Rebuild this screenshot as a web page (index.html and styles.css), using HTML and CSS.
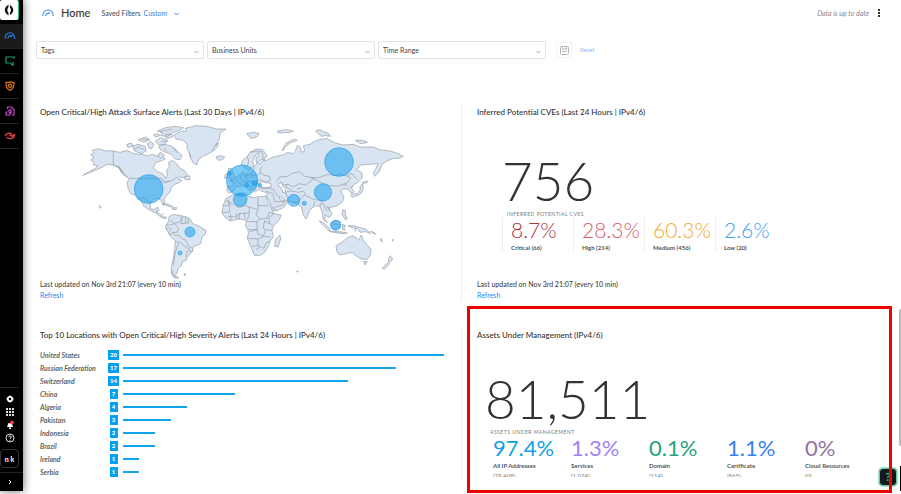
FILE: index.html
```html
<!DOCTYPE html>
<html lang="en">
<head>
    <meta charset="UTF-8">
    <meta name="viewport" content="width=device-width, initial-scale=1">
    <title>Home</title>
    <link rel="stylesheet" href="styles.css">
</head>
<body>

    <nav class="sidebar" aria-label="Main">
        <a class="logo" href="#" aria-label="Start">
            <svg width="12" height="12" viewBox="0 0 12 12"><path d="M5.500.6C3.500 2 1.800 3.800 1.800 6s1.500 4 3.700 5.400V8.800C4.700 8 4.400 7.200 4.400 6s.3-2 1.100-2.800zM7 1c1.800 1.300 3.300 3 3.300 5S9 9.800 7 11V8.600C7.600 8 7.900 7.200 7.900 6S7.600 4.200 7 3.500z" fill="#111"/></svg>
        </a>
        <a class="nav-item active" href="#" aria-label="Home">
            <svg width="12" height="12" viewBox="0 0 12 12" fill="none" stroke="#2a70c8" stroke-width="1.300"><path d="M1 9C1.200 5 3.300 2.800 6 2.800S10.500 5 11 9"/><path d="M3.600 8.500C4 6.300 5.500 5.300 8 5.600L6.500 7"/></svg>
        </a>
        <a class="nav-item" href="#" aria-label="Monitoring">
            <svg width="12" height="12" viewBox="0 0 12 12" fill="none" stroke="#1a9f78" stroke-width="1.200"><path d="M10 4V2H2v6h3.500M6 8l3 2.200V7"/></svg>
        </a>
        <a class="nav-item" href="#" aria-label="Protection">
            <svg width="12" height="12" viewBox="0 0 12 12" fill="none" stroke="#d8700e" stroke-width="1.300"><path d="M6 1.800c1.500.6 2.600.8 4 .6.3 3.600-.8 6.400-4 8C2.800 8.800 1.700 6 2 2.400c1.400.2 2.500 0 4-.6z"/><circle cx="6" cy="5.700" r="1.600"/></svg>
        </a>
        <a class="nav-item" href="#" aria-label="Reports">
            <svg width="12" height="12" viewBox="0 0 12 12" fill="none" stroke="#c248c9" stroke-width="1.200"><path d="M3.500 4V2h4l2.500 2.500V10H8M2 10V7h4v3zM4 5.500l3-1V9"/></svg>
        </a>
        <a class="nav-item" href="#" aria-label="Alerts">
            <svg width="12" height="12" viewBox="0 0 12 12" fill="none" stroke="#cf3c43" stroke-width="1.500"><path d="M1 6C3 3 5.500 2.500 7.500 4l-2 2M11 4.500C10.500 8 7 9.500 4 8L2.500 7M7 6.500l4-2"/></svg>
        </a>

        <div class="sidebar-tools">
            <a href="#" aria-label="Settings">
                <svg width="10" height="10" viewBox="0 0 10 10"><circle cx="5" cy="5" r="2.200" fill="none" stroke="#fff" stroke-width="1.800"/><path d="M5 1.300v1.200M5 7.500v1.200M1.300 5h1.200M7.500 5h1.200" stroke="#fff"/></svg>
            </a>
            <a href="#" aria-label="Apps">
                <svg width="10" height="10" viewBox="0 0 10 10" fill="#ddd"><path d="M2 2h2v2H2zM5 2h2v2H5zM8 2h2v2H8zM2 5h2v2H2zM5 5h2v2H5zM8 5h2v2H8zM2 8h2v2H2zM5 8h2v2H5zM8 8h2v2H8z" transform="translate(-1 -1)"/></svg>
            </a>
            <a href="#" aria-label="Notifications">
                <svg width="10" height="10" viewBox="0 0 10 10"><path d="M2 7L3.500 3 7 3.500 8 7zM4 7.500h2v1.500H4z" fill="#fff"/><circle cx="7" cy="2.500" r="1.900" fill="#e0484d"/></svg>
            </a>
            <a href="#" aria-label="Help">
                <svg width="10" height="10" viewBox="0 0 10 10" fill="none" stroke="#ddd"><circle cx="5" cy="5" r="4"/><path d="M3.600 4C3.700 2.500 6.400 2.500 6.400 4 6.400 5 5 5 5 6.200M5 7v1"/></svg>
            </a>
        </div>
        <button class="avatar" type="button">n k</button>
        <button class="expand" type="button" aria-label="Expand menu">
            <svg width="6" height="6" viewBox="0 0 6 6" fill="none" stroke="#fff"><path d="M2 1l2 2-2 2"/></svg>
        </button>
    </nav>

    <main class="content">
        <header class="topbar">
            <svg class="home-icon" width="12" height="10" viewBox="0 0 12 10" fill="none" stroke="#4a90e8" stroke-width="1.200"><path d="M.7 8C1 4 3 2 6 2s5 2.500 5.300 6"/><path d="M3.500 8C4 5.700 5.200 5 8 5.100"/></svg>
            <h1>Home</h1>
            <label class="saved" for="saved">Saved Filters</label>
            <span class="select-wrap saved-select">
                <select id="saved"><option>Custom</option></select>
                <svg class="chevron" width="5" height="4" viewBox="0 0 5 4" fill="none" stroke="#3f8fea"><path d="M.5 1l2 2 2-2"/></svg>
            </span>
            <span class="status">Data is up to date</span>
            <button class="more" type="button" aria-label="More">
                <svg width="4" height="8" viewBox="0 0 4 8" fill="#333"><path d="M1 0h2v2H1zM1 3h2v2H1zM1 6h2v2H1z"/></svg>
            </button>
        </header>

        <form class="filters">
            <span class="select-wrap">
                <select aria-label="Tags"><option>Tags</option></select>
                <svg class="chevron" width="5" height="4" viewBox="0 0 5 4" fill="none" stroke="#aaa"><path d="M.5 1l2 2 2-2"/></svg>
            </span>
            <span class="select-wrap">
                <select aria-label="Business Units"><option>Business Units</option></select>
                <svg class="chevron" width="5" height="4" viewBox="0 0 5 4" fill="none" stroke="#aaa"><path d="M.5 1l2 2 2-2"/></svg>
            </span>
            <span class="select-wrap">
                <select aria-label="Time Range"><option>Time Range</option></select>
                <svg class="chevron" width="5" height="4" viewBox="0 0 5 4" fill="none" stroke="#aaa"><path d="M.5 1l2 2 2-2"/></svg>
            </span>
            <button class="save" type="button" aria-label="Save">
                <svg width="9" height="9" viewBox="0 0 9 9" fill="none" stroke="#b5b5b5"><rect x=".5" y=".5" width="8" height="8" rx="1"/><path d="M2.500 1v2h4V1M2 5.500h5"/></svg>
            </button>
            <button class="reset" type="reset">Reset</button>
        </form>

        <div class="panels">
            <section class="panel">
                <h2>Open Critical/High Attack Surface Alerts (Last 30 Days | IPv4/6)</h2>
                <svg class="map" viewBox="0 0 1050 492" role="img" aria-label="World map of alerts">
                    <!-- Americas -->
                    <g class="land">
                        <path d="M62 135L72 128 62 120 72 112 66 106 84 101 104 107 130 108 150 112 172 106 190 116 215 118 232 122 248 118 262 124 268 116 276 124 286 132 272 138 258 142 250 158 262 170 278 176 288 190 292 180 290 166 298 156 296 142 308 136 322 148 330 160 342 166 352 178 344 188 330 186 324 192 336 196 326 204 314 208 304 218 300 230 290 242 282 252 284 268 278 266 272 254 258 250 246 256 240 266 242 280 252 284 262 276 266 284 260 292 272 298 276 306 290 306 286 312 272 306 258 294 240 286 222 274 214 258 202 250 196 240 182 236 174 220 172 200 178 192 160 178 148 158 132 150 112 148 98 156 84 162 62 172 38 181 76 160 84 152 70 150 72 142z"/>
                        <path d="M312 60L330 50 350 48 346 40 378 32 410 34 440 42 468 42 450 54 448 72 440 86 446 92 430 108 412 118 398 124 386 134 380 150 370 144 362 130 358 112 350 100 352 88 340 76 318 72z"/>
                        <path d="M298 304L314 298 330 302 346 304 360 312 368 326 384 332 408 346 406 356 396 368 392 386 372 394 366 410 352 426 348 436 338 440 334 452 324 460 322 474 314 478 326 490 312 488 304 476 304 456 310 430 314 400 316 378 302 364 290 346 286 334 294 322z"/>
                        <path d="M188 94l16-6 22 6 2 14-14 8-20-8zM170 88l14-4 6 8-16 6zM204 74l22-8 14 8-18 8zM232 86l10-6 10 8-8 14-8-4zM256 78l16-10 20 8-10 14-18-2zM266 94l18-6 22 6 14 12 16 16-6 12-14-2-12-14-18-6-16-10zM262 48l24-10 30-4 24 4-12 8-22 8-14 10-20-2 6-8zM286 58l20 0 2 8-20 4zM250 60l12-4 8 6-14 4zM270 112l14 8-10 10-10-6zM438 126l12-4 14 4-6 8-14 2zM342 186l16-4 2 12-14 0zM276 268l14-2 18 8-8 2-14-6zM306 278l14 0-2 6-12-2zM88 272l6 4-4 4zM342 476l6 2-5 4z"/>
                    </g>
                    <g class="border">
                        <path d="M130 108V150L148 160 158 176 164 184M178 190L274 190 286 200 304 198 322 186M202 250l18-2 14 10 6 8M258 292l6-8M274 304l6-10M300 316l14 10 18-8 8-14M332 304l4 14-4 8 24-2M346 306l2 18M354 310l2 14M288 330l12 0 14-4 12 14-6 12-12 0-8 10M308 352l8 10 10-2 8 10 14 6 8 18 12 6M316 380l14 2 18 14 10 6-6 8M326 384l-10 28-6 38M350 410l-2 16M358 408l12 2M288 342l10-4M304 338l-8 18"/>
                        <path d="M190 104l14-8 20 8M216 72l18 2M274 80l20-2M270 50l36-8M308 98l14 16M282 98l8 12M426 108l10-18 12-6M356 112l8 18M142 152l10 8 8 14 12 12M146 158l8 14M306 466l4 16 10 6M436 94l6-10M272 196l12 8 16-6"/>
                    </g>
                    <g transform="translate(480 0)">
                        <g class="land">
                            <path d="M-12 250L8 240 30 236 46 234 52 244 74 248 90 244 108 244 112 258 122 276 132 296 154 300 148 314 130 334 126 346 130 366 122 376 116 392 106 410 92 420 74 422 66 404 58 384 52 370 56 352 46 330 50 318 40 314 24 312 0 318-16 306-24 292-20 270z"/>
                            <path d="M34 150L38 136 52 124 60 112 78 102 98 104 104 112 112 124 104 128 106 138 124 128 138 124 160 120 172 112 188 116 196 108 202 92 212 96 214 112 224 108 220 92 240 88 260 76 290 70 316 84 340 90 370 88 392 96 430 96 450 104 480 108 500 114 520 124 508 130 490 130 470 138 456 148 448 170 434 184 430 174 440 156 444 146 420 148 392 150 380 164 396 174 396 190 384 202 372 208 364 218 372 230 364 236 354 222 340 222 332 228 342 246 338 260 322 272 306 276 296 280 306 296 298 308 286 300 284 312 292 324 280 312 276 290 270 274 256 272 240 284 234 300 228 312 220 300 214 276 206 270 190 262 172 258 158 250 146 244 150 254 168 258 172 264 160 278 138 288 130 286 120 262 110 244 112 234 94 228 86 222 76 232 70 220 60 214 66 226 60 228 50 216 40 212 30 214 18 216 10 228-2 234-10 228-6 214 8 212 12 202 0 196 16 190 30 178 40 170 46 176 58 174 70 166 72 154 62 158 56 168 48 160z"/>
                            <path d="M318 392L336 382 350 370 366 362 376 366 386 376 394 360 400 376 412 390 424 404 420 422 410 434 396 432 380 424 366 412 348 416 328 420 320 408zM400 440l12 0-6 10zM150 360l2 12-8 24-10-2 2-20zM480 422l8 10-8 10-6-4zM474 442l4 4-14 16-8-2z"/>
                            <path d="M-4 192l6-12-8-6 2-14 10 2 4 16 8 8-8 8zM-14 178l8-2 0 10-10 4zM268 318l12 4 18 18 4 10-10-6-16-16zM302 324l16-8 14 4-4 18-12 6-12-6zM302 350l26 0 24 4-14 2zM336 328l12 4-6 4 2 10-6-2zM338 284l8 2 0 14 6 12-6 2-10-16zM354 332l16 0 20 6 18 4 14 14-14-6-18 2-8-10-16-4zM362 242l8-6 12 0 8-10 0-12 8-8 2 12-4 14-10 8-18 6zM396 202l18-4-10 8zM156 106l12-22 24-12 10 4-22 8-14 12-8 12zM50 56l20-4 18 4-8 10-18 4zM142 48l24-4 24 4-8 4-36 2zM256 48l14-4 10 6 14 4 8 10-16-2-12 2zM376 76l24 0 12 6-20 4zM422 348l16 8-2 2-14-8zM452 370l6 12-6-6zM486 374l4 0-2 5zM200 468l5 0-2 4z"/>
                        </g>
                        <g class="water">
                            <path d="M78 118l10-6-10 20 2 16-8 6-4-14zM82 142l12-8 10 2-12 6-2 6zM86 208l12-8 24 6 2 10-22 2-14-2zM146 206l10-4 2 12 8 6 0 14-8-2-2-12-10-6z"/>
                        </g>
                        <g class="border">
                            <path d="M60 112l22-4 14 2 4 24M52 124l4 14-4 18M34 176l12 8 16-6 18 4 12-8-2-12 8-8M90 172l10 8 18 4 4 10-14 8-18-8-12 6-12-4M30 180l4 14 12 6 16-2 12 8 14-2M48 176l2 16M66 176l0 14M18 196l16 12M54 198l-2 12M64 202l4 12M80 196l-2 18M-2 198l12 4M140 200l8-14 26-2 10-8 26-6 14 14 26 4-8 12-16 10-18-4-18 10-16-8-14 2-8-10M240 188l26 0 28-10 20 4 20-6 28 12-8 14-32 12-34-4-28-14-12-6M350 182l16-6 16 18M94 220l24 0 14 4 10 20M108 228l20 8 6 24 28 0M166 232l18-4 22 4 14-4 6 8-12 14-8 12-20 0M168 234l6 22M184 224l-16-8 4-10M200 222l14-4M224 240l16 8 14 6 20 2 6 14 14 8M254 260l-4 12M272 262l-2 12M296 274l2 14M282 276l10 12M340 210l12 0M360 218l10-4"/>
                            <path d="M-22 272H-4V254M-14 256L28 278 46 272 52 246M0 262L-2 292-24 292M46 272l12 4 0 18-32 2-8 10-24-2M58 276l26 8V248M84 272h30M84 284l-6 16 12 12 24-2 18-14M58 294l-6 22M28 296l0 16M2 296l0 20M90 312l-10 8-28 0M80 320l2 24-22 6M54 344h28l2 14 16 4 6-12-6-14 4-20M104 318l24 12M52 370l32 2 0 20-18 2M84 372l18-8 20 2M84 392l18 8 6-16 12-6M78 404l12-8M106 344l20 2M112 308l6-16 14 4M118 310l0 16M18 296l4 16M46 312l-4-18M138 288l-8-14M136 276l22-6 6-12M376 338v12M308 326l20 4"/>
                        </g>
                    </g>
                    <!-- alert counts -->
                    <g class="bubbles">
                        <circle cx="236" cy="222" r="43"/>
                        <circle cx="516" cy="197" r="47"/>
                        <circle cx="478" cy="175" r="6"/>
                        <circle cx="530" cy="211" r="6"/>
                        <circle cx="554" cy="205" r="7"/>
                        <circle cx="570" cy="211" r="5"/>
                        <circle cx="510" cy="254" r="20"/>
                        <circle cx="360" cy="351" r="15"/>
                        <circle cx="330" cy="414" r="6"/>
                        <circle cx="807" cy="141" r="43"/>
                        <circle cx="759" cy="232" r="26"/>
                        <circle cx="671" cy="256" r="18"/>
                        <circle cx="703" cy="265" r="6"/>
                        <circle cx="797" cy="331" r="15"/>
                    </g>
                </svg>
                <p class="updated">Last updated on Nov 3rd 21:07 (every 10 min)</p>
                <a class="refresh" href="#">Refresh</a>
            </section>

            <section class="panel">
                <h2>Inferred Potential CVEs (Last 24 Hours | IPv4/6)</h2>
                <div class="metric cves">
                    <div class="total">756</div>
                    <div class="caption">INFERRED POTENTIAL CVES</div>
                    <ul class="shares">
                        <li class="critical"><b>8.7%</b><span>Critical (66)</span></li>
                        <li class="high"><b>28.3%</b><span>High (214)</span></li>
                        <li class="medium"><b>60.3%</b><span>Medium (456)</span></li>
                        <li class="low"><b>2.6%</b><span>Low (20)</span></li>
                    </ul>
                </div>
                <p class="updated">Last updated on Nov 3rd 21:07 (every 10 min)</p>
                <a class="refresh" href="#">Refresh</a>
            </section>

            <section class="panel">
                <h2>Top 10 Locations with Open Critical/High Severity Alerts (Last 24 Hours | IPv4/6)</h2>
                <table class="locations">
                    <tbody>
                        <tr><th scope="row">United States</th><td><span class="count">20</span></td><td class="track"><div class="bar" style="width: 100%"></div></td></tr>
                        <tr><th scope="row">Russian Federation</th><td><span class="count">17</span></td><td class="track"><div class="bar" style="width: 85%"></div></td></tr>
                        <tr><th scope="row">Switzerland</th><td><span class="count">14</span></td><td class="track"><div class="bar" style="width: 70%"></div></td></tr>
                        <tr><th scope="row">China</th><td><span class="count">7</span></td><td class="track"><div class="bar" style="width: 35%"></div></td></tr>
                        <tr><th scope="row">Algeria</th><td><span class="count">4</span></td><td class="track"><div class="bar" style="width: 20%"></div></td></tr>
                        <tr><th scope="row">Pakistan</th><td><span class="count">3</span></td><td class="track"><div class="bar" style="width: 15%"></div></td></tr>
                        <tr><th scope="row">Indonesia</th><td><span class="count">2</span></td><td class="track"><div class="bar" style="width: 10%"></div></td></tr>
                        <tr><th scope="row">Brazil</th><td><span class="count">2</span></td><td class="track"><div class="bar" style="width: 10%"></div></td></tr>
                        <tr><th scope="row">Ireland</th><td><span class="count">1</span></td><td class="track"><div class="bar" style="width: 5%"></div></td></tr>
                        <tr><th scope="row">Serbia</th><td><span class="count">1</span></td><td class="track"><div class="bar" style="width: 5%"></div></td></tr>
                    </tbody>
                </table>
            </section>

            <section class="panel">
                <h2>Assets Under Management (IPv4/6)</h2>
                <div class="metric assets">
                    <div class="total">81,511</div>
                    <div class="caption">ASSETS UNDER MANAGEMENT</div>
                    <ul class="shares">
                        <li class="ip"><b>97.4%</b><span>All IP Addresses</span><small>(79,408)</small></li>
                        <li class="services"><b>1.3%</b><span>Services</span><small>(1,024)</small></li>
                        <li class="domain"><b>0.1%</b><span>Domain</span><small>(114)</small></li>
                        <li class="certificate"><b>1.1%</b><span>Certificate</span><small>(865)</small></li>
                        <li class="cloud"><b>0%</b><span>Cloud Resources</span><small>(0)</small></li>
                    </ul>
                </div>
                <button class="help" type="button">?</button>
                <div class="highlight"></div>
            </section>
        </div>
        <div class="scroll-thumb"></div>
        <div class="corner"></div>
    </main>

</body>
</html>
```

FILE: styles.css
```css
* {
    box-sizing: border-box;
}
body {
    display: flex;
    min-height: 100vh;
    margin: 0;
    padding-bottom: 3px;
    background: #fff;
    color: #444;
    font-family: Lato, "Liberation Sans", sans-serif;
    font-size: 7px;
    line-height: 10px;
}
h1, h2, p, ul {
    margin: 0;
    padding: 0;
    font-weight: 500;
}
a {
    color: #2f86f0;
    text-decoration: none;
}
button, select {
    margin: 0;
    padding: 0;
    border: 0;
    background: none;
    color: inherit;
    font: inherit;
    appearance: none;
}
svg {
    display: block;
}

/* sidebar */
.sidebar {
    display: flex;
    flex-direction: column;
    flex: none;
    width: 23px;
    background: #000;
    box-shadow: 0 0 10px rgba(0, 0, 0, 0.6);
}
.logo {
    display: flex;
    align-items: center;
    justify-content: center;
    width: 19px;
    height: 20px;
    margin-bottom: 4px;
    background: #fff;
    border-right: 1px solid #19c37d;
    border-radius: 2px;
}
.nav-item {
    display: flex;
    align-items: center;
    justify-content: center;
    width: 19px;
    height: 25px;
    border-bottom: 1px solid #222;
}
.nav-item.active {
    width: 23px;
    padding-right: 4px;
    background: #1b1b1b;
}
.sidebar-tools {
    display: flex;
    flex-direction: column;
    align-items: center;
    gap: 3px;
    width: 19px;
    margin-top: auto;
    padding: 6px 0;
    border-top: 1px solid #222;
}
.avatar {
    width: 19px;
    height: 19px;
    border: 1px solid #333;
    border-radius: 4px;
    color: #fff;
    font-weight: 700;
}
.expand {
    display: flex;
    align-items: center;
    justify-content: center;
    height: 19px;
    width: 23px;
    margin-top: 4px;
    padding-right: 4px;
    border-top: 1px solid #222;
}

/* header */
.content {
    position: relative;
    flex: 1;
    min-width: 0;
}
.topbar {
    display: flex;
    align-items: center;
    height: 25px;
    padding: 0 20px 0 19px;
}
.topbar h1 {
    margin: 0 11px 0 7px;
    color: #333;
    font-size: 11px;
    line-height: 14px;
}
.select-wrap {
    position: relative;
}
.chevron {
    position: absolute;
    right: 5px;
    top: 50%;
    pointer-events: none;
}
.saved-select {
    margin-left: 3px;
    color: #2f86f0;
}
.saved-select select {
    width: 40px;
}
.saved-select .chevron {
    right: 5px;
    top: 4px;
}
.status {
    margin-left: auto;
    color: #888;
    font-style: italic;
}
.more {
    margin-left: 8px;
}

.filters {
    display: flex;
    align-items: center;
    gap: 3px;
    margin-top: 16px;
    padding-left: 13px;
}
.filters .select-wrap {
    flex: 0 1 168px;
}
.filters select {
    display: block;
    width: 100%;
    height: 18px;
    padding: 0 4px;
    border: 1px solid #e4e4e4;
    border-radius: 2px;
}
.save {
    display: flex;
    align-items: center;
    justify-content: center;
    width: 16px;
    height: 16px;
    margin-left: 7px;
    border: 1px solid #f4f4f4;
}
.reset {
    margin-left: 5px;
    color: #8fc0f7;
    font-size: 6px;
}

/* panels */
.panels {
    display: grid;
    grid-template-columns: 1fr 1fr;
    row-gap: 25px;
    margin-top: 44px;
}
.panel {
    position: relative;
    display: flex;
    flex-direction: column;
    min-width: 0;
    padding: 4px 15px 0;
}
.panel:nth-child(odd) {
    padding: 4px 17px 0;
    border-right: 1px solid #eee;
}
.panel h2 {
    color: #333;
    font-size: 8px;
}
.map {
    width: 350px;
    max-width: 100%;
    margin: -2px 0 0 30px;
}
.land {
    fill: #d9e4f2;
    stroke: #949ba4;
    stroke-width: 2;
    stroke-linejoin: round;
}
.border {
    fill: none;
    stroke: #949ba4;
    stroke-width: 2;
}
.water {
    fill: #fff;
    stroke: #949ba4;
    stroke-width: 2;
}
.bubbles {
    fill: #12a0ee;
    fill-opacity: 0.55;
    stroke: #1b9de8;
    stroke-opacity: 0.6;
    stroke-width: 3;
}
.updated {
    margin-top: auto;
}
.refresh {
    padding: 1px 0;
}
.total {
    color: #333;
    font-size: 53px;
    font-weight: 300;
    line-height: 60px;
}
.caption {
    padding-left: 5px;
    color: #777;
    font-size: 5px;
    line-height: 6px;
    letter-spacing: 0.5px;
}
.shares {
    display: flex;
    list-style: none;
}
.shares li {
    flex: none;
    width: 71px;
}
.shares b {
    display: block;
    font-size: 22px;
    font-weight: 300;
    line-height: 26px;
}
.shares span {
    display: block;
    color: #555;
    font-size: 6px;
    font-weight: 700;
    line-height: 10px;
}
.cves {
    padding: 34px 0 0 25px;
}
.cves li {
    height: 34px;
    padding-left: 8px;
    border-left: 1px solid #eee;
}
.cves b {
    font-size: 21px;
}
.critical b { color: #b0303c; }
.high b { color: #dd6068; }
.medium b { color: #f3a72e; }
.low b { color: #47a0f8; }

.locations {
    width: 404px;
    max-width: 100%;
    margin-top: 8px;
    border-collapse: collapse;
}
.locations th, .locations td {
    height: 13px;
    padding: 0;
}
.locations th {
    width: 65px;
    color: #666;
    font-style: italic;
    font-weight: 700;
    text-align: left;
    white-space: nowrap;
}
.locations td {
    width: 17px;
}
.locations .track {
    width: auto;
    padding-left: 1px;
}
.count {
    display: block;
    width: max-content;
    min-width: 8px;
    margin: 0 auto;
    padding: 0 2px;
    background: #05a0f0;
    color: #fff;
    font-size: 6px;
    font-weight: 900;
    text-align: center;
}
.bar {
    height: 2px;
    background: #12a5ee;
}

.assets {
    height: 137px;
    padding: 29px 0 0 8px;
    overflow: hidden;
}
.assets .shares {
    padding-left: 8px;
}
.assets li {
    width: 78px;
}
.assets b {
    font-weight: 400;
}
.assets small {
    display: block;
    margin-top: 1px;
    color: #888;
    font-size: 6px;
    line-height: 8px;
}
.ip b { color: #109fea; }
.services b { color: #a183f5; }
.domain b { color: #22a37c; }
.certificate b { color: #3582f0; }
.cloud b { color: #93739f; }

.help {
    position: absolute;
    right: 4px;
    bottom: -8px;
    width: 18px;
    height: 18px;
    background: #15191b;
    border: 1px solid #63c9a8;
    border-radius: 4px;
    box-shadow: 0 0 1px 1px #a5e0cd;
    color: #1fb98a;
    font-size: 12px;
    font-weight: 700;
}
.highlight {
    position: absolute;
    inset: -20px 9px -15px 5px;
    border: 3px solid #f00000;
    pointer-events: none;
}
.scroll-thumb {
    position: absolute;
    right: 0;
    top: 309px;
    width: 2px;
    height: 137px;
    background: #bbb;
    border-radius: 2px 0 0 2px;
}
.corner {
    position: absolute;
    right: 0;
    bottom: 0;
    width: 1px;
    height: 25px;
    background: #000;
}
```
